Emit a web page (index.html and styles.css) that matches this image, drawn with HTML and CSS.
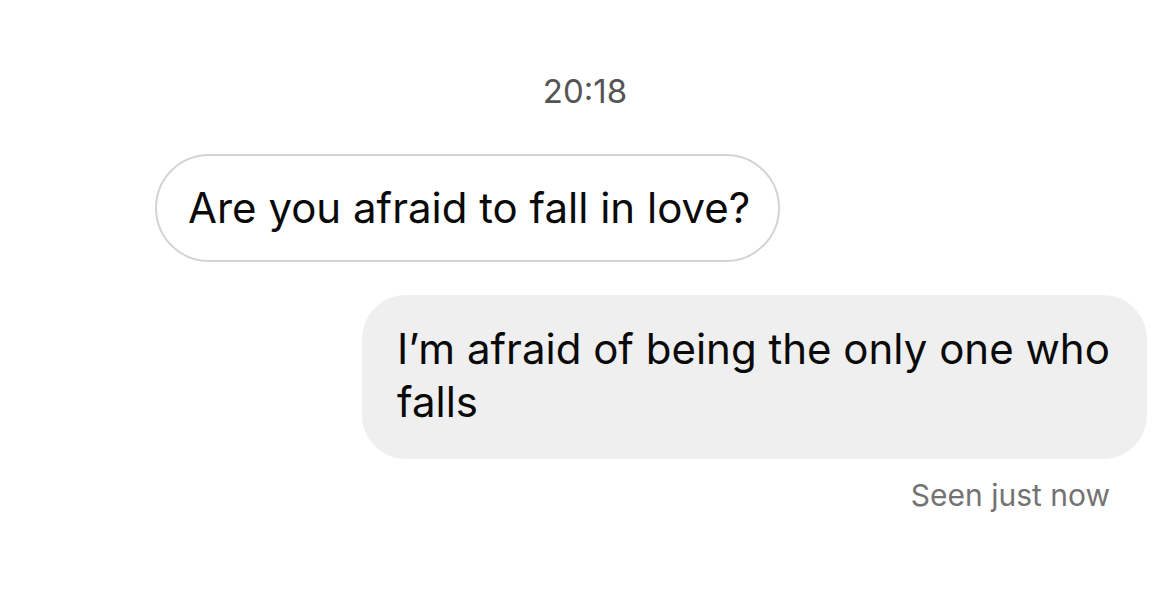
FILE: index.html
```html
<!DOCTYPE html>
<html lang="en">
<head>
<meta charset="utf-8">
<title>Chat</title>
<link rel="stylesheet" href="styles.css">
</head>
<body>
<main class="chat">
  <div class="time">20:18</div>
  <div class="row-in">
    <div class="bubble-in">Are you afraid to fall in love?</div>
  </div>
  <div class="row-out">
    <div class="bubble-out">I’m afraid of being the only one who falls</div>
  </div>
  <div class="seen">Seen just now</div>
</main>
</body>
</html>
```

FILE: styles.css
```css
html, body {
  margin: 0;
  padding: 0;
  background: #ffffff;
}
body {
  width: 1170px;
  height: 611px;
  overflow: hidden;
  font-family: Inter, "Liberation Sans", Arial, sans-serif;
  color: #0a0a0a;
}
.chat {
  display: flex;
  flex-direction: column;
  padding-top: 72px;
}
.time {
  text-align: center;
  font-size: 33px;
  line-height: 38px;
  color: #555555;
}
.row-in {
  display: flex;
  padding-left: 155px;
  margin-top: 44px;
}
.bubble-in {
  box-sizing: border-box;
  height: 108px;
  display: flex;
  align-items: center;
  padding: 0 28px 0 31px;
  border: 2px solid #d4d4d4;
  border-radius: 54px;
  font-size: 42px;
  line-height: 50px;
  background: #ffffff;
}
.row-out {
  display: flex;
  justify-content: flex-end;
  padding-right: 23px;
  margin-top: 33px;
}
.bubble-out {
  box-sizing: border-box;
  width: 785px;
  padding: 27px 34px 31px 35px;
  background: #efefef;
  border-radius: 44px;
  font-size: 42px;
  line-height: 53px;
}
.seen {
  align-self: flex-end;
  margin-right: 60px;
  margin-top: 19px;
  font-size: 30px;
  line-height: 34px;
  color: #737373;
}
```
